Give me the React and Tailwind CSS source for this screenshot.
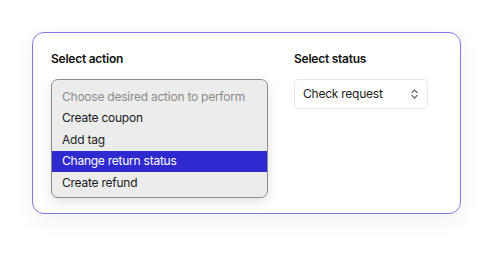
import React from 'react';

const options = [
    { label: 'Choose desired action to perform', muted: true },
    { label: 'Create coupon' },
    { label: 'Add tag' },
    { label: 'Change return status', active: true },
    { label: 'Create refund' },
];

const App = () => {
    return (
        <div className="w-[500px] h-[253px] bg-white pt-[32px] pl-[32px] font-['Inter',sans-serif] tracking-[-0.015em]">
            <div className="w-[429px] h-[182px] rounded-[12px] border border-[#7b7be6] bg-white shadow-[0_6px_24px_rgba(0,0,0,0.06)] flex gap-[26px] pl-[18px] pt-[18px]">
                <div className="w-[217px]">
                    <h2 className="text-[12px] font-semibold text-[#111] leading-[16px] mb-[12px]">Select action</h2>
                    <ul className="rounded-[7px] border border-[#8c8c8c] bg-[#ececec] pt-[6px] pb-[3px] shadow-[0_4px_12px_rgba(0,0,0,0.12)] overflow-hidden">
                        {options.map((opt) => (
                            <li
                                key={opt.label}
                                className={`h-[21.5px] flex items-center px-[10px] text-[12px] whitespace-nowrap ${
                                    opt.active ? 'bg-[#2e2ad0] text-white' : opt.muted ? 'text-[#8b8b8b]' : 'text-[#1a1a1a]'
                                }`}
                            >
                                {opt.label}
                            </li>
                        ))}
                    </ul>
                </div>
                <div className="w-[134px]">
                    <h2 className="text-[12px] font-semibold text-[#111] leading-[16px] mb-[12px]">Select status</h2>
                    <div className="h-[30px] rounded-[4px] border border-[#e6e6e6] bg-white flex items-center justify-between pl-[8px] pr-[9px]">
                        <span className="text-[12px] text-[#1a1a1a]">Check request</span>
                        <svg width="7" height="12" viewBox="0 0 7 12" fill="none" stroke="#666" strokeWidth="1.2" strokeLinecap="round" strokeLinejoin="round">
                            <path d="M1 4.5 L3.5 1.8 L6 4.5" />
                            <path d="M1 7.5 L3.5 10.2 L6 7.5" />
                        </svg>
                    </div>
                </div>
            </div>
        </div>
    );
};

export default App;
